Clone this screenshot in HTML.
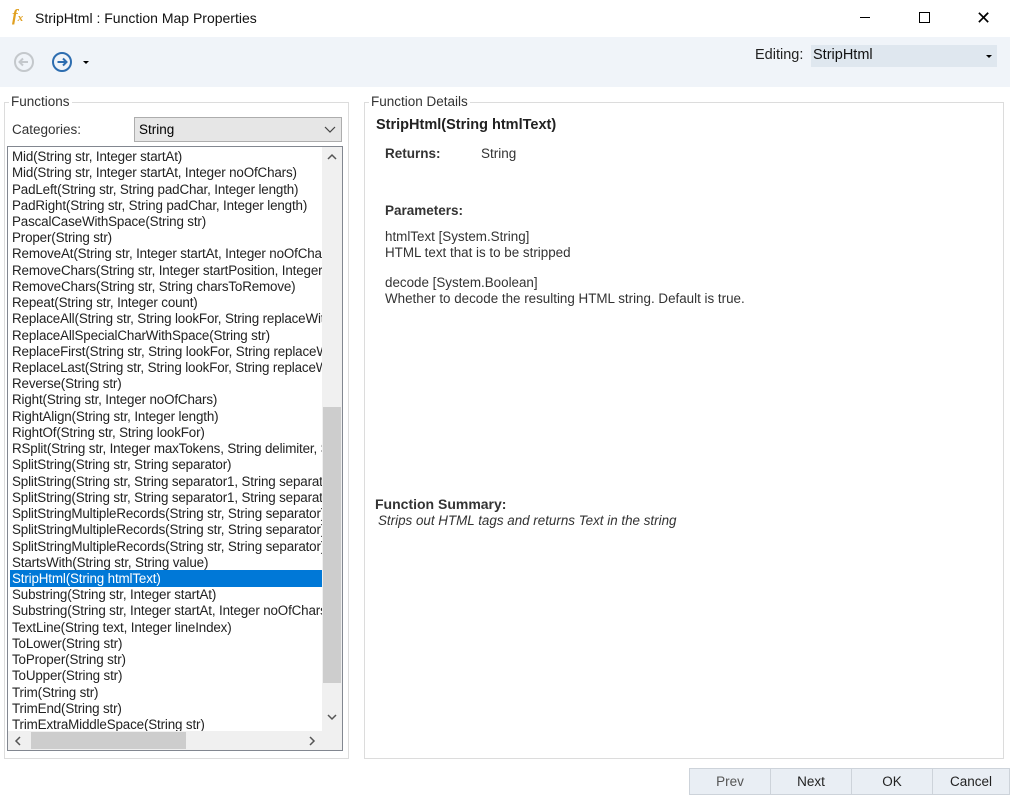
<!DOCTYPE html>
<html><head><meta charset="utf-8"><style>
*{box-sizing:border-box;margin:0;padding:0}
body{width:1010px;height:795px;background:#fff;font-family:"Liberation Sans",sans-serif;position:relative;overflow:hidden;color:#000}
.a{position:absolute}
.li{position:absolute;left:12px;font-size:13.4px;letter-spacing:-0.15px;white-space:nowrap;height:16px;line-height:16px;color:#222}
.btn{position:absolute;top:768px;height:27px;border:1px solid #cdd3da;background:#e9eef4;font-size:13.5px;text-align:center;line-height:26px;color:#222}
.d{font-size:13.4px;color:#333;line-height:16px}
</style></head><body>
<div class="a" style="left:12px;top:6px;font:italic bold 17px 'Liberation Serif',serif;color:#e0a020">f<span style="font-size:11px">x</span></div>
<div class="a" style="left:35px;top:10px;font-size:14px;color:#111">StripHtml : Function Map Properties</div>
<div class="a" style="left:860px;top:17px;width:10px;height:1px;background:#000"></div>
<div class="a" style="left:919px;top:12px;width:11px;height:11px;border:1px solid #000"></div>
<div class="a" style="left:976px;top:9px;font-size:18px;line-height:18px">✕</div>
<div class="a" style="left:0;top:37px;width:1010px;height:50px;background:#f0f4f9"></div>
<svg class="a" style="left:13px;top:51px" width="22" height="22"><circle cx="11" cy="11" r="9" fill="none" stroke="#c4c8cc" stroke-width="2"/><path d="M15 11H7M10 7.5L6.5 11 10 14.5" fill="none" stroke="#c4c8cc" stroke-width="2"/></svg>
<svg class="a" style="left:51px;top:51px" width="22" height="22"><circle cx="11" cy="11" r="9" fill="none" stroke="#2d6db0" stroke-width="2"/><path d="M6.5 11H15M12 7.5L15.5 11 12 14.5" fill="none" stroke="#2d6db0" stroke-width="2"/></svg>
<div class="a" style="left:83px;top:61px;border:3px solid transparent;border-top:3px solid #000"></div>
<div class="a" style="left:755px;top:47px;font-size:14.5px;color:#222">Editing:</div>
<div class="a" style="left:811px;top:45px;width:186px;height:22px;background:#dfe7ef;font-size:14.5px;padding:2px 2px;color:#111">StripHtml</div>
<div class="a" style="left:986px;top:55px;border:3px solid transparent;border-top:3px solid #000"></div>
<div class="a" style="left:4px;top:102px;width:345px;height:657px;border:1px solid #dcdcdc"></div>
<div class="a" style="left:9px;top:94px;background:#fff;padding:0 2px;font-size:13.5px;color:#333">Functions</div>
<div class="a" style="left:12px;top:122px;font-size:13.5px;color:#333">Categories:</div>
<div class="a" style="left:134px;top:117px;width:208px;height:25px;background:#e6e6e6;border:1px solid #adadad;font-size:13.5px;padding:4px 4px">String</div>
<svg class="a" style="left:324px;top:126px" width="12" height="8"><path d="M1 1L6 6 11 1" fill="none" stroke="#444" stroke-width="1.2"/></svg>
<div class="a" style="left:7px;top:146px;width:336px;height:605px;border:1px solid #828790;background:#fff;overflow:hidden">
<div class="a" style="left:314px;top:0;width:20px;height:584px;background:#f0f0f0"></div>
<div class="a" style="left:315px;top:260px;width:18px;height:276px;background:#cdcdcd"></div>
<svg class="a" style="left:319px;top:6px" width="10" height="8"><path d="M1 6L5 2 9 6" fill="none" stroke="#555" stroke-width="1.5"/></svg>
<svg class="a" style="left:319px;top:566px" width="10" height="8"><path d="M1 2L5 6 9 2" fill="none" stroke="#555" stroke-width="1.5"/></svg>
<div class="a" style="left:0;top:584px;width:334px;height:19px;background:#f0f0f0"></div>
<div class="a" style="left:23px;top:585px;width:155px;height:17px;background:#cdcdcd"></div>
<svg class="a" style="left:6px;top:589px" width="8" height="10"><path d="M6 1L2 5 6 9" fill="none" stroke="#555" stroke-width="1.5"/></svg>
<svg class="a" style="left:300px;top:589px" width="8" height="10"><path d="M2 1L6 5 2 9" fill="none" stroke="#555" stroke-width="1.5"/></svg>
</div>
<div class="a" style="left:8px;top:147px;width:314px;height:584px;overflow:hidden">
<div class="a" style="left:2px;top:423px;width:312px;height:17px;background:#0078d7"></div>
</div>
<div class="a" style="left:0;top:0;width:322px;height:731px;overflow:hidden">
<div class="li" style="top:149px">Mid(String str, Integer startAt)</div>
<div class="li" style="top:165.2px">Mid(String str, Integer startAt, Integer noOfChars)</div>
<div class="li" style="top:181.5px">PadLeft(String str, String padChar, Integer length)</div>
<div class="li" style="top:197.7px">PadRight(String str, String padChar, Integer length)</div>
<div class="li" style="top:213.9px">PascalCaseWithSpace(String str)</div>
<div class="li" style="top:230.2px">Proper(String str)</div>
<div class="li" style="top:246.4px">RemoveAt(String str, Integer startAt, Integer noOfChars)</div>
<div class="li" style="top:262.6px">RemoveChars(String str, Integer startPosition, Integer length)</div>
<div class="li" style="top:278.8px">RemoveChars(String str, String charsToRemove)</div>
<div class="li" style="top:295.1px">Repeat(String str, Integer count)</div>
<div class="li" style="top:311.3px">ReplaceAll(String str, String lookFor, String replaceWith)</div>
<div class="li" style="top:327.5px">ReplaceAllSpecialCharWithSpace(String str)</div>
<div class="li" style="top:343.8px">ReplaceFirst(String str, String lookFor, String replaceWith)</div>
<div class="li" style="top:360px">ReplaceLast(String str, String lookFor, String replaceWith)</div>
<div class="li" style="top:376.2px">Reverse(String str)</div>
<div class="li" style="top:392.4px">Right(String str, Integer noOfChars)</div>
<div class="li" style="top:408.7px">RightAlign(String str, Integer length)</div>
<div class="li" style="top:424.9px">RightOf(String str, String lookFor)</div>
<div class="li" style="top:441.1px">RSplit(String str, Integer maxTokens, String delimiter, String)</div>
<div class="li" style="top:457.4px">SplitString(String str, String separator)</div>
<div class="li" style="top:473.6px">SplitString(String str, String separator1, String separator2)</div>
<div class="li" style="top:489.8px">SplitString(String str, String separator1, String separator2)</div>
<div class="li" style="top:506px">SplitStringMultipleRecords(String str, String separator)</div>
<div class="li" style="top:522.3px">SplitStringMultipleRecords(String str, String separator)</div>
<div class="li" style="top:538.5px">SplitStringMultipleRecords(String str, String separator)</div>
<div class="li" style="top:554.7px">StartsWith(String str, String value)</div>
<div class="li" style="top:571px;color:#fff">StripHtml(String htmlText)</div>
<div class="li" style="top:587.2px">Substring(String str, Integer startAt)</div>
<div class="li" style="top:603.4px">Substring(String str, Integer startAt, Integer noOfChars)</div>
<div class="li" style="top:619.6px">TextLine(String text, Integer lineIndex)</div>
<div class="li" style="top:635.9px">ToLower(String str)</div>
<div class="li" style="top:652.1px">ToProper(String str)</div>
<div class="li" style="top:668.3px">ToUpper(String str)</div>
<div class="li" style="top:684.6px">Trim(String str)</div>
<div class="li" style="top:700.8px">TrimEnd(String str)</div>
<div class="li" style="top:717px">TrimExtraMiddleSpace(String str)</div>
</div>
<div class="a" style="left:364px;top:102px;width:640px;height:657px;border:1px solid #dcdcdc"></div>
<div class="a" style="left:369px;top:94px;background:#fff;padding:0 2px;font-size:13.5px;color:#333">Function Details</div>
<div class="a" style="left:376px;top:117px;font-size:14.5px;font-weight:bold;color:#222">StripHtml(String htmlText)</div>
<div class="a" style="left:385px;top:146px;font-size:13.5px;font-weight:bold;color:#333">Returns:</div>
<div class="a" style="left:481px;top:146px;font-size:13.5px;color:#333">String</div>
<div class="a" style="left:385px;top:203px;font-size:13.5px;font-weight:bold;color:#333">Parameters:</div>
<div class="a d" style="left:385px;top:229px">htmlText [System.String]<br>HTML text that is to be stripped</div>
<div class="a d" style="left:385px;top:275px">decode [System.Boolean]<br>Whether to decode the resulting HTML string. Default is true.</div>
<div class="a" style="left:375px;top:496px;font-size:14px;font-weight:bold;color:#333">Function Summary:</div>
<div class="a d" style="left:378px;top:513px;font-style:italic">Strips out HTML tags and returns Text in the string</div>
<div class="btn" style="left:689px;width:82px;color:#555">Prev</div>
<div class="btn" style="left:770px;width:82px">Next</div>
<div class="btn" style="left:851px;width:82px">OK</div>
<div class="btn" style="left:932px;width:78px">Cancel</div>
</body></html>
